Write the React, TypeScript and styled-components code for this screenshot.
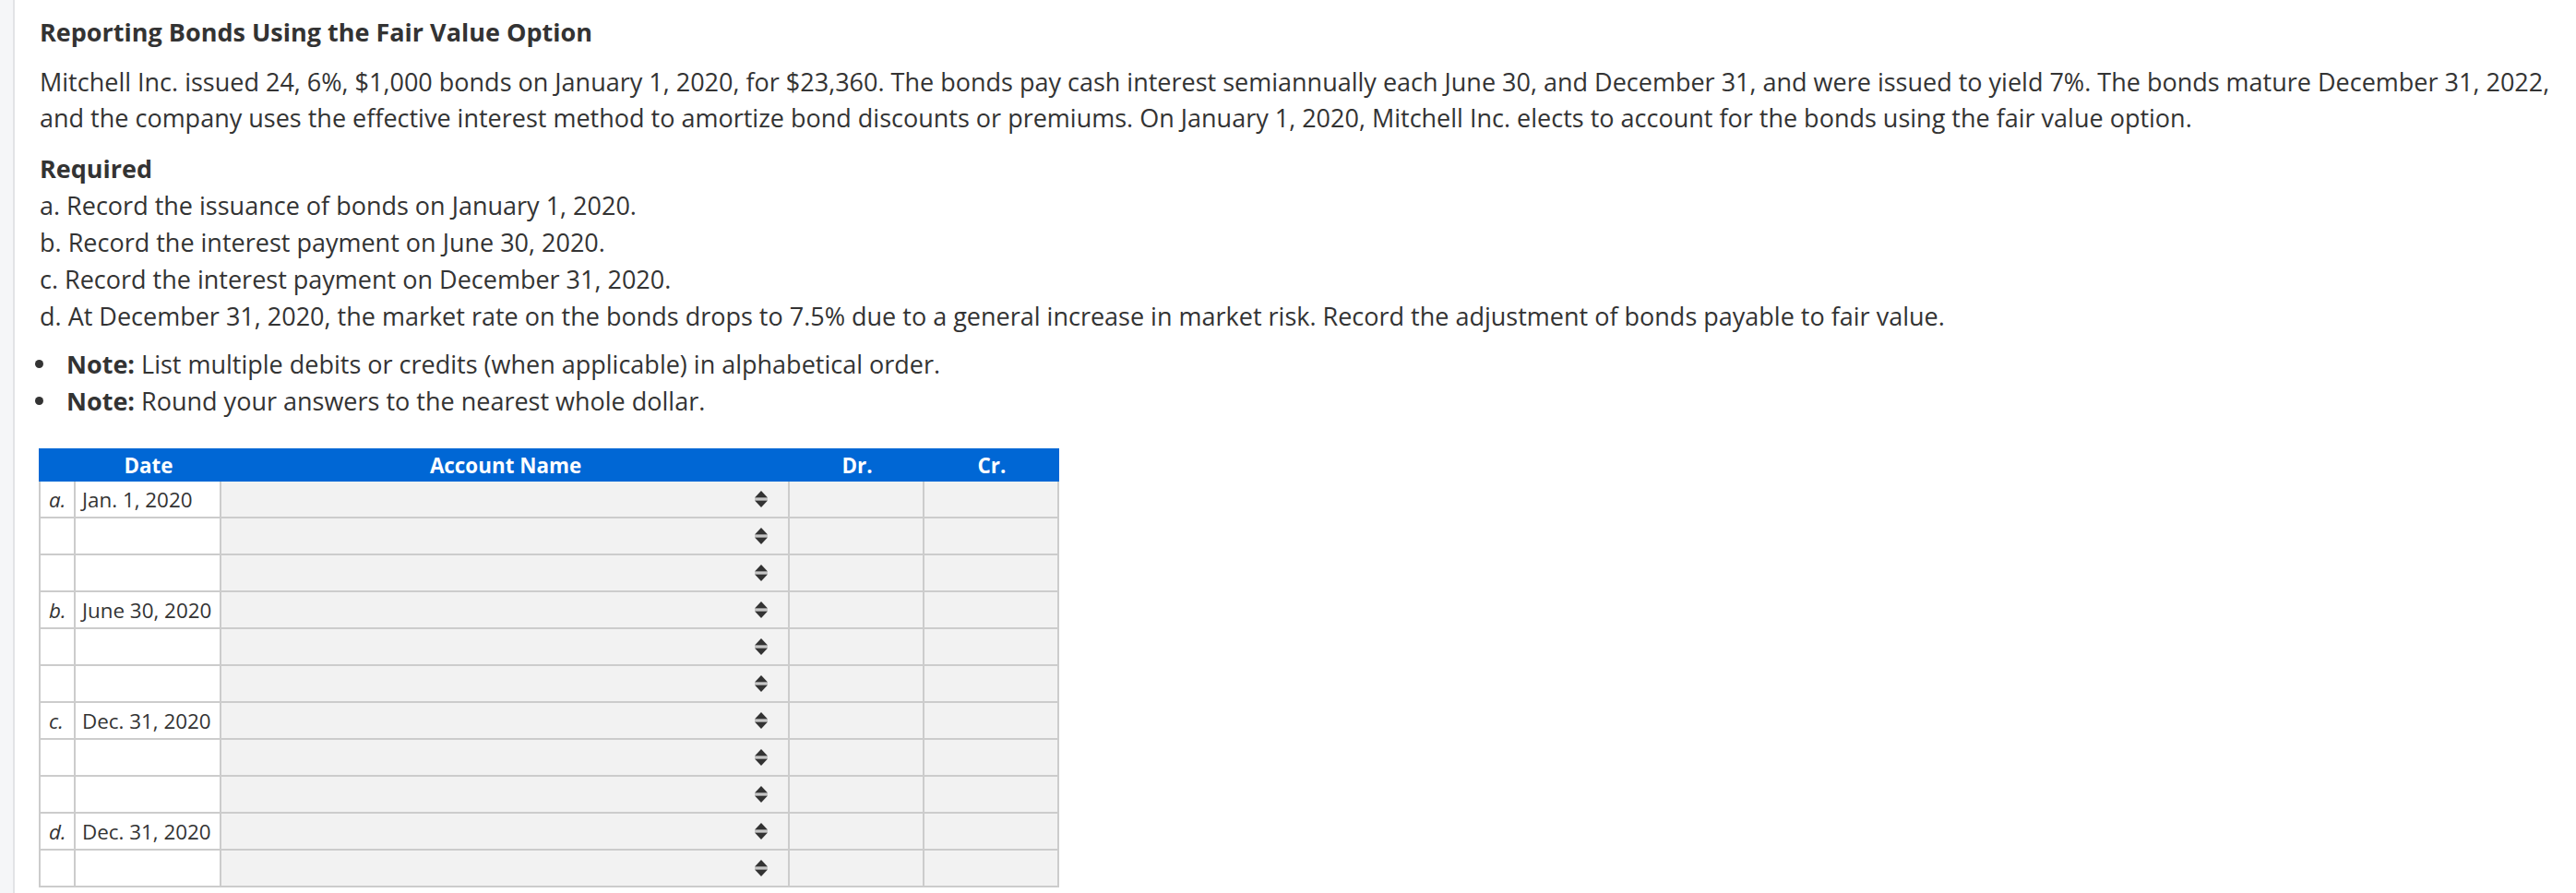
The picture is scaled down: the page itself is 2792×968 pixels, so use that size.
import React, { FC } from 'react'
import styled, { createGlobalStyle } from 'styled-components'

const GlobalStyle = createGlobalStyle`
  html, body {
    margin: 0;
    padding: 0;
    background: #fff;
  }
  body {
    font-family: 'Open Sans', 'Noto Sans', 'Liberation Sans', sans-serif;
    color: #333;
  }
`

type Row = { letter?: string; date?: string }

const rows: Row[] = [
    { letter: 'a.', date: 'Jan. 1, 2020' },
    {},
    {},
    { letter: 'b.', date: 'June 30, 2020' },
    {},
    {},
    { letter: 'c.', date: 'Dec. 31, 2020' },
    {},
    {},
    { letter: 'd.', date: 'Dec. 31, 2020' },
    {},
]

const SelectArrows: FC = () => (
    <svg width="14" height="18" viewBox="0 0 14 18">
        <path d="M0 7.5 L7 0 L14 7.5 Z" fill="#333" />
        <rect x="0" y="8.4" width="14" height="1.2" fill="#aaa" />
        <path d="M0 10.5 L14 10.5 L7 18 Z" fill="#333" />
    </svg>
)

const App: FC = () => {
    return (
        <>
            <GlobalStyle />
            <Page>
                <SideStrip />
                <Content>
                    <Title>Reporting Bonds Using the Fair Value Option</Title>
                    <Intro>
                        Mitchell Inc. issued 24, 6%, $1,000 bonds on January 1, 2020, for $23,360. The bonds pay cash
                        interest semiannually each June 30, and December 31, and were issued to yield 7%. The bonds
                        mature December 31, 2022, and the company uses the effective interest method to amortize bond
                        discounts or premiums. On January 1, 2020, Mitchell Inc. elects to account for the bonds using
                        the fair value option.
                    </Intro>
                    <Required>Required</Required>
                    <Line>a. Record the issuance of bonds on January 1, 2020.</Line>
                    <Line>b. Record the interest payment on June 30, 2020.</Line>
                    <Line>c. Record the interest payment on December 31, 2020.</Line>
                    <Line>
                        d. At December 31, 2020, the market rate on the bonds drops to 7.5% due to a general increase
                        in market risk. Record the adjustment of bonds payable to fair value.
                    </Line>
                    <Notes>
                        <NoteItem>
                            <Bullet />
                            <span><b>Note:</b> List multiple debits or credits (when applicable) in alphabetical order.</span>
                        </NoteItem>
                        <NoteItem>
                            <Bullet />
                            <span><b>Note:</b> Round your answers to the nearest whole dollar.</span>
                        </NoteItem>
                    </Notes>
                    <Journal>
                        <HeadRow>
                            <HeadCell />
                            <HeadCell>Date</HeadCell>
                            <HeadCell>Account Name</HeadCell>
                            <HeadCell>Dr.</HeadCell>
                            <HeadCell>Cr.</HeadCell>
                        </HeadRow>
                        {rows.map((row, i) => (
                            <BodyRow key={i}>
                                <LetterCell>{row.letter}</LetterCell>
                                <DateCell>{row.date}</DateCell>
                                <AccountCell>
                                    <SelectArrows />
                                </AccountCell>
                                <AmountCell />
                                <AmountCell />
                            </BodyRow>
                        ))}
                    </Journal>
                </Content>
            </Page>
        </>
    )
}

const Page = styled.div`
display: flex;
min-height: 968px;
`

const SideStrip = styled.div`
flex: 0 0 14px;
background: #f5f6f8;
border-right: 2px solid #e2e3e6;
`

const Content = styled.div`
flex: 1;
padding: 16.5px 10px 0 27px;
`

const Title = styled.h1`
margin: 0;
font-size: 27px;
line-height: 36px;
font-weight: 700;
color: #333;
`

const Intro = styled.p`
margin: 17.8px 0 0;
font-size: 27px;
line-height: 38.4px;
`

const Required = styled.h2`
margin: 15.4px 0 0;
font-size: 27px;
line-height: 40px;
font-weight: 700;
`

const Line = styled.p`
margin: 0;
font-size: 27px;
line-height: 40px;
`

const Notes = styled.ul`
list-style: none;
margin: 12px 0 0;
padding: 0;
`

const NoteItem = styled.li`
display: flex;
align-items: center;
font-size: 27px;
line-height: 40px;
b {
  font-weight: 700;
}
`

const Bullet = styled.span`
flex: 0 0 auto;
width: 9px;
height: 9px;
border-radius: 50%;
background: #333;
margin: 0 25px 0 -5px;
`

const Journal = styled.div`
margin-top: 31.5px;
margin-left: -1px;
width: 1106px;
font-size: 22.4px;
`

const columns = '40px 158px 616px 146px 146px'

const HeadRow = styled.div`
display: grid;
grid-template-columns: ${columns};
height: 36px;
background: #0067d5;
color: #fff;
font-weight: 700;
`

const HeadCell = styled.div`
display: flex;
align-items: center;
justify-content: center;
`

const BodyRow = styled.div`
display: grid;
grid-template-columns: ${columns};
height: 40px;
`

const Cell = styled.div`
box-sizing: border-box;
border-right: 2px solid #cccccc;
border-bottom: 2px solid #cccccc;
display: flex;
align-items: center;
`

const LetterCell = styled(Cell)`
border-left: 2px solid #cccccc;
padding-left: 9px;
font-style: italic;
background: #fff;
`

const DateCell = styled(Cell)`
padding-left: 7px;
background: #fff;
`

const AccountCell = styled(Cell)`
background: #f2f2f2;
justify-content: flex-end;
padding-right: 22px;
svg {
  display: block;
}
`

const AmountCell = styled(Cell)`
background: #f2f2f2;
`

export default App
